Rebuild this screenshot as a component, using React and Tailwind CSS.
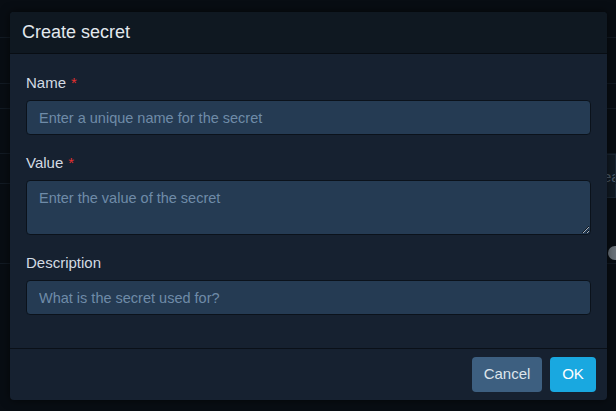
import { useState } from "react";

const Field = ({ label, required, children }) => (
  <div className="flex flex-col">
    <label className="text-[15px] leading-[20px] text-[#d3dbe3] mb-[7px]">
      {label}
      {required && <span className="text-[#e5302f] ml-[5px]">*</span>}
    </label>
    {children}
  </div>
);

const inputCls =
  "w-full bg-[#253b53] border border-[#0b121b] rounded-[4px] px-[12px] text-[14.5px] text-[#d3dbe3] placeholder:text-[#6f8ba8] outline-none";

export default function App() {
  const [name, setName] = useState("");
  const [value, setValue] = useState("");
  const [desc, setDesc] = useState("");

  return (
    <div className="relative w-[616px] h-[411px] overflow-hidden bg-[#080d13] font-['Liberation_Sans','Helvetica',sans-serif]">
      {/* page behind the overlay */}
      <div className="flex flex-col pt-[37px]">
        <div className="h-[46px] border-t border-[#121a23]" />
        <div className="h-[25px] border-t border-[#121a23]" />
        <div className="h-[45px] border-t border-[#121a23]" />
        <div className="h-[30px] border-t border-[#121a23] flex justify-end">
          <div className="w-[14px] h-[44px] bg-[#111a24] border border-[#1a2633] text-[#4c5a68] text-[15px] leading-[44px] overflow-hidden whitespace-nowrap">
            ea
          </div>
        </div>
        <div className="h-[80px] border-t border-[#121a23] flex justify-end items-end">
          <div className="w-[8px] h-[14px] rounded-l-full bg-[#6b737b] mb-[3px]" />
        </div>
        <div className="h-[60px] border-t border-[#121a23]" />
      </div>

      {/* modal */}
      <div className="absolute left-[10px] top-[12px] w-[597px] h-[388px] flex flex-col rounded-[4px] overflow-hidden bg-[#162130] shadow-[0_0_10px_rgba(0,0,0,0.6)]">
        <div className="h-[42px] shrink-0 flex items-center px-[12px] bg-[#0f1821] border-b border-[#080d13]">
          <h2 className="text-[18px] text-[#e2e8ee] font-normal">Create secret</h2>
        </div>

        <div className="flex-1 flex flex-col gap-[18px] px-[16px] pt-[19px]">
          <Field label="Name" required>
            <input
              className={`${inputCls} h-[35px]`}
              placeholder="Enter a unique name for the secret"
              value={name}
              onChange={(e) => setName(e.target.value)}
            />
          </Field>
          <Field label="Value" required>
            <textarea
              className={`${inputCls} h-[55px] py-[7px] leading-[20px] resize-y`}
              placeholder="Enter the value of the secret"
              value={value}
              onChange={(e) => setValue(e.target.value)}
            />
          </Field>
          <Field label="Description">
            <input
              className={`${inputCls} h-[35px]`}
              placeholder="What is the secret used for?"
              value={desc}
              onChange={(e) => setDesc(e.target.value)}
            />
          </Field>
        </div>

        <div className="h-[52px] shrink-0 flex items-center justify-end gap-[8px] px-[11px] border-t border-[#0a1018]">
          <button className="h-[35px] w-[70px] rounded-[4px] bg-[#3d5f80] text-[15px] text-[#dde5ec]">
            Cancel
          </button>
          <button className="h-[35px] w-[46px] rounded-[4px] bg-[#19a8e0] text-[15px] text-white">
            OK
          </button>
        </div>
      </div>
    </div>
  );
}
